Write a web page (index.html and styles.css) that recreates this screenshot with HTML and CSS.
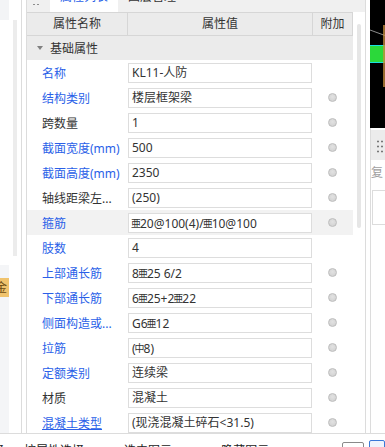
FILE: index.html
```html
<!DOCTYPE html>
<html lang="zh-CN">
<head>
  <meta charset="UTF-8">
  <meta name="viewport" content="width=device-width, initial-scale=1.0">
  <title>属性列表</title>
  <link rel="stylesheet" href="styles.css">
</head>
<body>
  <div class="app">
    <div class="side">
      <div class="side-col">
        <div class="side-top"></div>
        <div class="side-space"></div>
        <div class="side-bottom">
          <div class="side-tag">金</div>
        </div>
      </div>
      <div class="side-scroll"></div>
    </div>

    <div class="panel">
      <div class="tabs">
        <span class="grip"></span>
        <span class="tab active">属性列表</span>
        <span class="tab">图层管理</span>
      </div>
      <div class="panel-body">
        <div class="grid">
          <div class="grid-head">
            <div>属性名称</div>
            <div>属性值</div>
            <div>附加</div>
          </div>
          <div class="group"><span class="caret"></span>基础属性</div>

          <div class="row">
            <div class="name link">名称</div>
            <div class="value"><div class="box">KL11-人防</div></div>
            <div class="extra"></div>
          </div>
          <div class="row">
            <div class="name link">结构类别</div>
            <div class="value"><div class="box">楼层框架梁</div></div>
            <div class="extra"><span class="dot"></span></div>
          </div>
          <div class="row">
            <div class="name">跨数量</div>
            <div class="value"><div class="box">1</div></div>
            <div class="extra"><span class="dot"></span></div>
          </div>
          <div class="row">
            <div class="name link">截面宽度(mm)</div>
            <div class="value"><div class="box">500</div></div>
            <div class="extra"><span class="dot"></span></div>
          </div>
          <div class="row">
            <div class="name link">截面高度(mm)</div>
            <div class="value"><div class="box">2350</div></div>
            <div class="extra"><span class="dot"></span></div>
          </div>
          <div class="row">
            <div class="name">轴线距梁左...</div>
            <div class="value"><div class="box">(250)</div></div>
            <div class="extra"><span class="dot"></span></div>
          </div>
          <div class="row hover">
            <div class="name link">箍筋</div>
            <div class="value"><div class="box"><span class="bar">亜</span>20@100(4)/<span class="bar">亜</span>10@100</div></div>
            <div class="extra"><span class="dot"></span></div>
          </div>
          <div class="row">
            <div class="name link">肢数</div>
            <div class="value"><div class="box">4</div></div>
            <div class="extra"></div>
          </div>
          <div class="row">
            <div class="name link">上部通长筋</div>
            <div class="value"><div class="box">8<span class="bar">亜</span>25 6/2</div></div>
            <div class="extra"><span class="dot"></span></div>
          </div>
          <div class="row">
            <div class="name link">下部通长筋</div>
            <div class="value"><div class="box">6<span class="bar">亜</span>25+2<span class="bar">亜</span>22</div></div>
            <div class="extra"><span class="dot"></span></div>
          </div>
          <div class="row">
            <div class="name link">侧面构造或...</div>
            <div class="value"><div class="box">G6<span class="bar">亜</span>12</div></div>
            <div class="extra"><span class="dot"></span></div>
          </div>
          <div class="row">
            <div class="name link">拉筋</div>
            <div class="value"><div class="box">(<span class="bar">中</span>8)</div></div>
            <div class="extra"><span class="dot"></span></div>
          </div>
          <div class="row">
            <div class="name link">定额类别</div>
            <div class="value"><div class="box">连续梁</div></div>
            <div class="extra"><span class="dot"></span></div>
          </div>
          <div class="row">
            <div class="name">材质</div>
            <div class="value"><div class="box">混凝土</div></div>
            <div class="extra"><span class="dot"></span></div>
          </div>
          <div class="row">
            <div class="name link under">混凝土类型</div>
            <div class="value"><div class="box">(现浇混凝土碎石&lt;31.5)</div></div>
            <div class="extra"><span class="dot"></span></div>
          </div>
        </div>
        <div class="gutter"><div class="thumb"></div></div>
      </div>
    </div>

    <div class="right">
      <svg class="cad" width="15" height="128" viewBox="0 0 15 128">
        <rect x="0" y="0" width="15" height="128" fill="#000"/>
        <line x1="0" y1="30" x2="15" y2="35.5" stroke="#8c8c8c" stroke-width="1"/>
        <rect x="0" y="45" width="15" height="18" fill="#2bd83a"/>
        <line x1="0" y1="45.5" x2="14" y2="45.5" stroke="#19e0e0" stroke-width="1"/>
        <line x1="0" y1="62.5" x2="14" y2="62.5" stroke="#19e0e0" stroke-width="1"/>
        <line x1="14" y1="25" x2="14" y2="87" stroke="#c98f3e" stroke-width="1.5"/>
      </svg>
      <div class="right-lower">
        <div class="right-tools"><span class="grip"></span></div>
        <div class="right-text">复</div>
        <div class="right-box"><div class="right-row"></div></div>
      </div>
    </div>
  </div>

  <div class="status">
    <span class="cut">择</span>
    <span class="status-item">按属性选择</span>
    <span class="status-item">选中图元 ▾</span>
    <span class="status-item">隐藏图元 ▾</span>
    <span class="status-btn"></span>
    <span class="status-icon"></span>
  </div>
</body>
</html>
```

FILE: styles.css
```css
* {
  box-sizing: border-box;
}
html, body {
  margin: 0;
}
body {
  width: 385px;
  height: 447px;
  overflow: hidden;
  font-family: "Noto Sans", "Noto Sans CJK SC", sans-serif;
  font-size: 12px;
  color: #333;
  background: #fff;
}
.app {
  display: flex;
  height: 434px;
  border-bottom: 1px solid #dcdcdc;
}

/* left neighbour panel */
.side {
  width: 22px;
  display: flex;
  border-right: 1px solid #dcdcdc;
}
.side-col {
  width: 9px;
  display: flex;
  flex-direction: column;
}
.side-top {
  height: 20px;
  background: #f3f4f6;
}
.side-space {
  flex: 1;
}
.side-bottom {
  height: 168px;
  background: #f4f5f7;
  padding-top: 13px;
}
.side-tag {
  height: 19px;
  background: #f0c36d;
  overflow: hidden;
  line-height: 19px;
  text-indent: -5px;
  font-size: 12px;
  color: #6b4a12;
  white-space: nowrap;
}
.side-scroll {
  width: 4px;
  height: 236px;
  margin: 20px 0 0 4px;
  background: #ececec;
}

/* property panel */
.panel {
  width: 340px;
  margin-left: 4px;
  border-left: 1px solid #dcdcdc;
  border-right: 1px solid #dcdcdc;
  overflow: hidden;
}
.tabs {
  display: flex;
  height: 26px;
  margin-top: -14px;
  line-height: 22px;
  background: #f0f0f0;
  white-space: nowrap;
}
.grip {
  width: 6px;
  height: 14px;
  margin: 0 11px 0 6px;
  align-self: center;
  background-image: radial-gradient(circle, #8d8d8d 0.9px, transparent 1.1px);
  background-size: 4px 5px;
  background-position: -1px 0;
}
.tab {
  padding-left: 10px;
}
.tab.active {
  width: 68px;
  background: #fff;
  color: #2a5fe8;
}
.panel-body {
  display: flex;
}
.grid {
  width: 326px;
}
.gutter {
  width: 12px;
  padding-left: 4px;
}
.thumb {
  width: 4px;
  height: 204px;
  margin-top: 12px;
  border-radius: 2px;
  background: #e6e6e6;
}
.grid-head {
  display: grid;
  grid-template-columns: 100px 185px 41px;
  height: 24px;
  line-height: 22px;
  background: #ebebeb;
  border-top: 1px solid #d6d6d6;
  border-bottom: 1px solid #d6d6d6;
  text-align: center;
}
.grid-head div + div {
  border-left: 1px solid #d6d6d6;
}
.grid-head div:last-child {
  border-right: 1px solid #d6d6d6;
}
.group {
  display: flex;
  align-items: center;
  height: 24px;
  background: #ebebeb;
  padding-left: 10px;
}
.caret {
  width: 0;
  height: 0;
  margin-right: 7px;
  border-left: 3px solid transparent;
  border-right: 3px solid transparent;
  border-top: 4px solid #808080;
}
.row {
  display: grid;
  grid-template-columns: 100px 185px 41px;
  height: 25px;
  align-items: center;
}
.row.hover {
  background: #f2f2f2;
}
.name {
  padding-left: 15px;
  white-space: nowrap;
  overflow: hidden;
}
.name.link {
  color: #2a5fe8;
}
.name.under {
  text-decoration: underline;
}
.box {
  width: 184px;
  height: 20px;
  margin-left: 1px;
  padding-left: 3px;
  line-height: 18px;
  border: 1px solid #dddddd;
  background: #fff;
  white-space: nowrap;
  overflow: hidden;
}
.bar {
  font-size: 10px;
  vertical-align: 1px;
  margin: 0 -1px;
}
.extra {
  display: flex;
  justify-content: center;
}
.dot {
  width: 9px;
  height: 9px;
  border-radius: 50%;
  background: radial-gradient(circle at 50% 40%, #e2e2e2, #cfcfcf);
  border: 1px solid #bdbdbd;
}

/* right drawing area */
.right {
  width: 15px;
  margin-left: 4px;
  display: flex;
  flex-direction: column;
}
.cad {
  display: block;
}
.right-lower {
  flex: 1;
  border-left: 1px solid #dcdcdc;
}
.right-tools {
  height: 30px;
  margin-top: 2px;
  background: #ececec;
  display: flex;
  align-items: center;
}
.right-tools .grip {
  width: 6px;
  height: 14px;
  margin: 2px 0 0 6px;
  background-image: radial-gradient(circle, #777 0.9px, transparent 1.2px);
  background-size: 4px 5px;
}
.right-text {
  height: 30px;
  line-height: 25px;
  color: #a0a0a0;
  white-space: nowrap;
  overflow: hidden;
}
.right-box {
  margin-left: 1px;
  border-top: 1px solid #dcdcdc;
  border-left: 1px solid #dcdcdc;
}
.right-row {
  height: 34px;
  border-bottom: 1px solid #dcdcdc;
}

/* bottom status bar */
.status {
  display: flex;
  height: 13px;
  padding-top: 9px;
  line-height: 16px;
  white-space: nowrap;
  color: #222;
}
.cut {
  margin-left: -8px;
}
.status-item {
  margin-left: 20px;
}
.status-item + .status-item {
  margin-left: 40px;
}
.status-btn {
  width: 22px;
  height: 16px;
  margin: -1px 0 0 auto;
  border: 1px solid #8a8a8a;
  border-radius: 2px;
}
.status-icon {
  width: 16px;
  height: 16px;
  margin: -3px 0 0 5px;
  border: 1px solid #3a78d8;
  border-radius: 2px;
  background: #eef4fd;
}
```
